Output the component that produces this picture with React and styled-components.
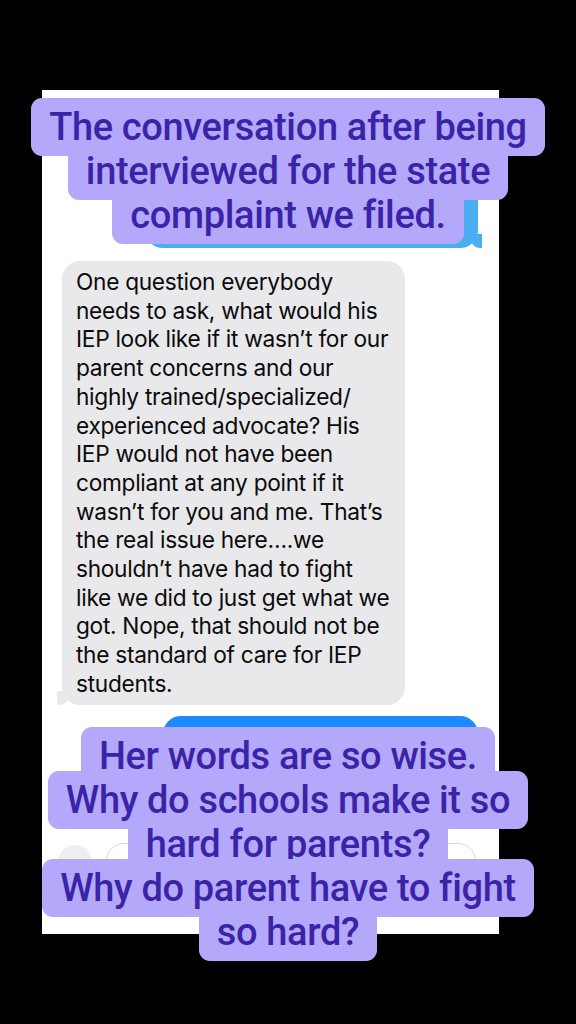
import React from "react";
import styled, { createGlobalStyle } from "styled-components";

const GlobalStyle = createGlobalStyle`
  html, body {
    margin: 0;
    padding: 0;
    background: #000;
  }
  #root {
    width: 576px;
    height: 1024px;
  }
`;

const topCaption = [
  "The conversation after being",
  "interviewed for the state",
  "complaint we filed.",
];

const bottomCaption = [
  "Her words are so wise.",
  "Why do schools make it so",
  "hard for parents?",
  "Why do parent have to fight",
  "so hard?",
];

// wrapped the way the phone wrapped it
const messageLines = [
  "One question everybody",
  "needs to ask, what would his",
  "IEP look like if it wasn’t for our",
  "parent concerns and our",
  "highly trained/specialized/",
  "experienced advocate? His",
  "IEP would not have been",
  "compliant at any point if it",
  "wasn’t for you and me. That’s",
  "the real issue here….we",
  "shouldn’t have had to fight",
  "like we did to just get what we",
  "got. Nope, that should not be",
  "the standard of care for IEP",
  "students.",
];

const App = () => {
  return (
    <>
      <GlobalStyle />
      <Stage>
        <Screenshot>
          <BlueBubble $width={333} $height={148} $shade="#49aef2" />
          <GrayBubble>
            {messageLines.map((line) => (
              <MessageLine key={line}>{line}</MessageLine>
            ))}
          </GrayBubble>
          <BlueBubble $width={315} $height={110} $shade="#1d8bfb" />
          <InputBar>
            <PlusButton />
            <InputField />
          </InputBar>
          <HomeIndicator />
        </Screenshot>

        <Caption $top={98}>
          {topCaption.map((line) => (
            <CaptionLine key={line}>{line}</CaptionLine>
          ))}
        </Caption>

        <Caption $top={727}>
          {bottomCaption.map((line) => (
            <CaptionLine key={line}>{line}</CaptionLine>
          ))}
        </Caption>
      </Stage>
    </>
  );
};

const Stage = styled.div`
  position: relative;
  width: 576px;
  height: 1024px;
  background: #000;
  padding-top: 90px;
  box-sizing: border-box;
  overflow: hidden;
`;

const Screenshot = styled.div`
  width: 457px;
  height: 844px;
  margin-left: 42px;
  background: #fff;
  box-sizing: border-box;
  padding: 0 21px 0 20px;
  display: flex;
  flex-direction: column;
  overflow: hidden;
`;

const BlueBubble = styled.div`
  position: relative;
  align-self: flex-end;
  width: ${(p) => p.$width}px;
  height: ${(p) => p.$height}px;
  margin-top: ${(p) => (p.$height > 120 ? 10 : 11)}px;
  margin-bottom: 13px;
  border-radius: 18px;
  background: ${(p) => p.$shade};
  flex-shrink: 0;

  &::after {
    content: "";
    position: absolute;
    right: -4px;
    bottom: 0;
    width: 12px;
    height: 14px;
    background: ${(p) => p.$shade};
    border-bottom-left-radius: 10px 12px;
  }
`;

const GrayBubble = styled.div`
  position: relative;
  width: 343px;
  box-sizing: border-box;
  padding: 7px 10px 6px 14px;
  border-radius: 18px;
  background: #e9e9eb;
  color: #0b0b0b;
  font-family: Inter, "Liberation Sans", sans-serif;
  font-size: 22.7px;
  line-height: 28.7px;
  letter-spacing: -0.3px;
  flex-shrink: 0;

  &::before {
    content: "";
    position: absolute;
    left: -5px;
    bottom: 0;
    width: 14px;
    height: 14px;
    background: #e9e9eb;
    border-bottom-right-radius: 12px 14px;
  }
`;

const MessageLine = styled.div`
  white-space: nowrap;
`;

const InputBar = styled.div`
  display: flex;
  align-items: center;
  gap: 14px;
  margin-top: auto;
  margin-bottom: 53px;
`;

const PlusButton = styled.div`
  width: 34px;
  height: 34px;
  border-radius: 50%;
  background: #eeeeef;
  margin-left: -4px;
`;

const InputField = styled.div`
  flex: 1;
  height: 36px;
  border-radius: 18px;
  border: 1px solid #d8d8dc;
  margin-right: 2px;
`;

const HomeIndicator = styled.div`
  position: absolute;
  top: 920px;
  left: 200px;
  width: 140px;
  height: 5px;
  border-radius: 3px;
  background: #111;
`;

const Caption = styled.div`
  position: absolute;
  top: ${(p) => p.$top}px;
  left: 0;
  right: 0;
  display: flex;
  flex-direction: column;
  align-items: center;
`;

const CaptionLine = styled.div`
  height: 58px;
  margin-bottom: -14px;
  padding: 0 18px;
  box-sizing: border-box;
  border-radius: 11px;
  background: #b4a8fa;
  color: #3b23a8;
  font-family: Roboto, "Liberation Sans", sans-serif;
  font-weight: 500;
  font-size: 38px;
  line-height: 58px;
  letter-spacing: -0.35px;
  white-space: nowrap;
`;

export default App;
